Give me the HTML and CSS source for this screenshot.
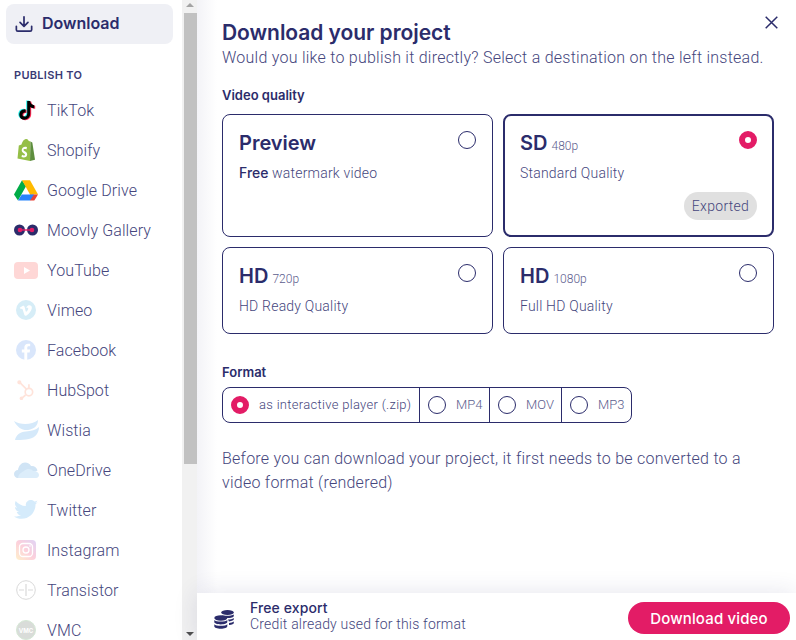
FILE: index.html
```html
<!DOCTYPE html>
<html lang="en">
<head>
<meta charset="utf-8">
<title>Download your project</title>
<link rel="stylesheet" href="styles.css">
</head>
<body>
<div class="app">
  <aside class="sidebar">
    <div class="download-tab">
      <svg class="dl-icon" viewBox="0 0 20 20" width="20" height="20" fill="none" stroke="#2b2c6b" stroke-width="1.9" stroke-linecap="round" stroke-linejoin="round"><path d="M10 2v10.500M5.600 8.300 10 12.600l4.400-4.300M1.500 12.500v3.800c0 1 .8 1.700 1.700 1.700h13.600c1 0 1.700-.8 1.700-1.700v-3.800"/></svg>
      <span class="download-text">Download</span>
    </div>
    <div class="publish-label">PUBLISH TO</div>
    <ul class="dest-list">
      <li class="dest"><span class="ico"><svg viewBox="0 0 24 24" width="24" height="24"><path fill="#25f4ee" d="M12.200 2.500h3c.3 2.400 1.700 4 4 4.300v3c-1.500 0-2.800-.4-4-1.200v6.400c0 6.800-8.700 8.300-10.600 3-1.300-4.300 2-7.700 6-7.100v3.200c-2-.5-3.500.9-3 2.800.7 1.900 4.600 1.600 4.600-1.700z"/><path fill="#fe2c55" d="M14.200 3.500h3c.3 2.400 1.700 4 4 4.300v3c-1.500 0-2.800-.4-4-1.200v6.400c0 6.800-8.700 8.300-10.600 3-1.300-4.300 2-7.700 6-7.100v3.200c-2-.5-3.500.9-3 2.800.7 1.900 4.600 1.600 4.600-1.700z"/><path fill="#000" d="M13.200 3h3c.3 2.400 1.700 4 4 4.300v3c-1.500 0-2.800-.4-4-1.200v6.400c0 6.800-8.700 8.300-10.600 3-1.300-4.300 2-7.700 6-7.100v3.200c-2-.5-3.500.9-3 2.800.7 1.900 4.600 1.600 4.600-1.700z"/></svg></span><span>TikTok</span></li>
      <li class="dest"><span class="ico"><svg viewBox="0 0 24 24" width="24" height="24"><path fill="#95bf47" d="M16.500 3.500 14.800 3C14.200 1.500 13.200.8 12 1 9.500 1.300 8 4.500 7.500 6.500L4.800 7.400 3.500 20.500 16 23z"/><path fill="#5e8e3e" d="M16.500 3.500 16 23l5-1.200L18.300 4.500z"/><path fill="#fff" d="M13 9.200l-.6 2.200c-1.400-.7-3-.4-2.900.6.100 1.200 3.500 1.500 3.700 4.300.2 2.700-2.900 4.100-5.700 2.800l.5-2.300c1.200.9 3.100 1 3-.3-.1-1.300-3.100-1.500-3.300-4.100C7.500 9.600 10.600 7.900 13 9.200z"/></svg></span><span>Shopify</span></li>
      <li class="dest"><span class="ico"><svg viewBox="0 0 24 21" width="24" height="21"><path fill="#00ac47" d="M8 .3 0 14.500l4 6 8-14.200z"/><path fill="#ffba00" d="M8 .3h8l8 14.200h-8z"/><path fill="#ea4335" d="M16 14.500h8l-3.500 5.800c-.2.200-.5.200-.7.200H16z"/><path fill="#2684fc" d="M4 20.500 7.800 14.500H20l-4 6z"/></svg></span><span>Google Drive</span></li>
      <li class="dest"><span class="ico"><svg viewBox="0 0 24 12" width="24" height="12"><circle cx="5.500" cy="6" r="5.500" fill="#2b2c6b"/><circle cx="18.500" cy="6" r="5.500" fill="#2b2c6b"/><circle cx="6" cy="6" r="2.300" fill="#e31c66"/><circle cx="18" cy="6" r="2.300" fill="#e31c66"/><rect x="6" y="5.300" width="12" height="1.400" fill="#e31c66"/></svg></span><span>Moovly Gallery</span></li>
      <li class="dest"><span class="ico"><svg viewBox="0 0 24 17" width="24" height="17"><rect width="24" height="17" rx="4" fill="#fed7d6"/><path fill="#fff" d="M10 5l6 3.500-6 3.500z"/></svg></span><span>YouTube</span></li>
      <li class="dest"><span class="ico"><svg viewBox="0 0 24 24" width="20" height="20"><circle cx="12" cy="12" r="12" fill="#d6edf7"/><path fill="#fff" d="M4.500 9.400 6 11c1-.8 1.500-.8 2 .5l2 6.200c.6 1.500 1.500 1.600 3 .6 2.500-1.800 5.500-5.500 6-8.500.4-3-2.500-4.200-5-2.800-.8.600-1.500 1.400-1.800 2.700 1.500-1 3-.3 2.400 1.300-.5 1.200-1.900 3-2.500 3s-.8-2-1.500-4.700C10 6.500 9 6.500 7.800 7.200z"/></svg></span><span>Vimeo</span></li>
      <li class="dest"><span class="ico"><svg viewBox="0 0 24 24" width="20" height="20"><circle cx="12" cy="12" r="12" fill="#d9e6fb"/><path fill="#fff" d="M10 24V15H7v-3.500h3V9c0-3 1.800-4.600 4.500-4.600l2.500.2v3h-1.700c-1.500 0-1.800.8-1.800 1.800v2.100h3.400l-.5 3.500h-2.900v9z"/></svg></span><span>Facebook</span></li>
      <li class="dest"><span class="ico"><svg viewBox="0 0 24 24" width="20" height="20" fill="none" stroke="#ffe3da" stroke-width="2"><circle cx="15.500" cy="14.500" r="4.500"/><path d="M15.500 5v4.500M5 3.500l7.500 7.500M11.500 18l-4 3.500"/><circle cx="4" cy="2.800" r="1.500" fill="#ffe3da"/><circle cx="6.500" cy="22" r="1.200" fill="#ffe3da"/></svg></span><span>HubSpot</span></li>
      <li class="dest"><span class="ico"><svg viewBox="0 0 25 20" width="25" height="20"><path fill="#d5e9fa" d="M0 1C6 5 18 5 24 0 24 6 20 9 14 10 8 10.500 3 7 0 1z"/><path fill="#d5e9fa" d="M1 20C2 15 6 12 12 11.500 17 11 22 10 25 7 25 14 20 19 12 19.500 8 20 4 20 1 20z"/></svg></span><span>Wistia</span></li>
      <li class="dest"><span class="ico"><svg viewBox="0 0 25 16" width="25" height="16"><path fill="#d0e4f5" d="M4 16C1.500 16 0 14 0 12c0-2.300 1.800-4 4-4 .5-4 3.500-7.500 7-7.500 2.800 0 5 1.500 6 3.500 3-.5 6 1.500 6.500 4.500L14 13z"/><path fill="#dcedfa" d="M5 16c-2 0 0-5 5-7 3-3 8-2 9 0 3-.5 6 1.500 6 4 0 1.500-1 3-3 3z"/></svg></span><span>OneDrive</span></li>
      <li class="dest"><span class="ico"><svg viewBox="0 0 24 20" width="24" height="20"><path fill="#d5ebfb" d="M24 2.300c-.9.400-1.800.7-2.800.8 1-.6 1.800-1.500 2.200-2.700-1 .6-2 1-3.100 1.200A4.900 4.900 0 0 0 11.900 6C7.800 5.800 4.200 3.900 1.700.9c-1.300 2.200-.7 5.100 1.500 6.600-.8 0-1.600-.2-2.200-.6 0 2.300 1.600 4.400 3.900 4.900-.7.200-1.500.2-2.200.1.600 2 2.400 3.400 4.600 3.400C5.200 16 2.600 16.800 0 16.500 2.200 17.900 4.800 18.800 7.500 18.800c9.100 0 14.300-7.700 14-14.600 1-.7 1.800-1.500 2.500-1.900z"/></svg></span><span>Twitter</span></li>
      <li class="dest"><span class="ico"><svg viewBox="0 0 20 20" width="20" height="20"><defs><linearGradient id="ig" x1="0" y1="1" x2="1" y2="0"><stop offset="0" stop-color="#fff0cc"/><stop offset=".5" stop-color="#fcd0dc"/><stop offset="1" stop-color="#e0d4f5"/></linearGradient></defs><rect width="20" height="20" rx="4" fill="url(#ig)"/><rect x="3.500" y="3.500" width="13" height="13" rx="3.500" fill="none" stroke="#fff" stroke-width="1.300"/><circle cx="10" cy="10" r="3" fill="none" stroke="#fff" stroke-width="1.300"/><circle cx="14" cy="6" r=".8" fill="#fff"/></svg></span><span>Instagram</span></li>
      <li class="dest"><span class="ico"><svg viewBox="0 0 20 20" width="20" height="20" fill="none" stroke="#d9d9d9" stroke-width="1"><circle cx="10" cy="10" r="9.300"/><path stroke-width="1.200" d="M3 10h5M12 10h5M10 4v12"/></svg></span><span>Transistor</span></li>
      <li class="dest"><span class="ico"><span class="vmc">VMC</span></span><span>VMC</span></li>
    </ul>
  </aside>
  <div class="scrollbar">
    <div class="arrow-up"></div>
    <div class="thumb"></div>
    <div class="track-rest"></div>
    <div class="arrow-down"></div>
  </div>
  <main class="main">
    <div class="content">
      <button class="close" aria-label="Close"><svg viewBox="0 0 13 13" width="13" height="13" fill="none" stroke="#2b2c6b" stroke-width="1.500"><path d="M.7.700l11.600 11.600M12.300.700.700 12.300"/></svg></button>
      <h1 class="title">Download your project</h1>
      <p class="subtitle">Would you like to publish it directly? Select a destination on the left instead.</p>
      <h2 class="field-label quality-label">Video quality</h2>
      <div class="quality-grid">
        <div class="card tall">
          <span class="radio card-radio"></span>
          <div class="card-title">Preview</div>
          <div class="card-desc"><b>Free</b> watermark video</div>
        </div>
        <div class="card tall selected">
          <span class="radio on card-radio"></span>
          <div class="card-title">SD <small>480p</small></div>
          <div class="card-desc">Standard Quality</div>
          <span class="pill">Exported</span>
        </div>
        <div class="card">
          <span class="radio card-radio"></span>
          <div class="card-title">HD <small>720p</small></div>
          <div class="card-desc">HD Ready Quality</div>
        </div>
        <div class="card">
          <span class="radio card-radio"></span>
          <div class="card-title">HD <small>1080p</small></div>
          <div class="card-desc">Full HD Quality</div>
        </div>
      </div>
      <h2 class="field-label format-label">Format</h2>
      <div class="format-group">
        <div class="fmt fmt-zip"><span class="radio on"></span><span class="fmt-dark">as interactive player (.zip)</span></div>
        <div class="fmt fmt-mp4"><span class="radio"></span><span class="fmt-name">MP4</span></div>
        <div class="fmt fmt-mov"><span class="radio"></span><span class="fmt-name">MOV</span></div>
        <div class="fmt fmt-mp3"><span class="radio"></span><span class="fmt-name">MP3</span></div>
      </div>
      <p class="note">Before you can download your project, it first needs to be converted to a video format (rendered)</p>
    </div>
    <footer class="footer">
      <svg class="coins" viewBox="0 0 20 20" width="20" height="20" fill="#2b2c6b"><ellipse cx="13.500" cy="3.500" rx="6.300" ry="2.600"/><path d="M7.500 6.200c1.500.8 10 1 12.300-.6v1.300c0 1.200-2.800 2.200-6.300 2.200-1.300 0-2.700-.2-3.600-.5z"/><path d="M14 10.500c2 0 4.500-.5 5.800-1.500v1.300c0 1-1.800 1.800-4.800 2.100z"/><path d="M15 14c2 0 3.800-.6 4.800-1.400v1.300c0 1-1.800 1.800-4.800 2z"/><ellipse cx="6.800" cy="9" rx="6.500" ry="2.700"/><path d="M.3 11c1.500 2 11.500 2 13 0v2c0 1.400-2.900 2.400-6.500 2.400S.3 14.400.3 13z"/><path d="M.3 15.300c1.500 2 11.500 2 13 0v2c0 1.500-2.900 2.500-6.500 2.500S.3 18.800.3 17.300z"/></svg>
      <div class="foot-text">
        <div class="foot-title">Free export</div>
        <div class="foot-sub">Credit already used for this format</div>
      </div>
      <button class="cta">Download video</button>
    </footer>
  </main>
</div>
</body>
</html>
```
FILE: styles.css
```css
* { box-sizing: border-box; }
html, body { margin: 0; padding: 0; height: 100%; overflow: hidden; }
body { font-family: "Inter", "Liberation Sans", sans-serif; color: #2b2c6b; background: #fff; }
.app { display: flex; width: 796px; height: 640px; overflow: hidden; }

.sidebar { width: 182px; flex: none; height: 640px; overflow: hidden; padding: 4px 9px 0 6px; background: #fff; }
.download-tab { height: 40px; border-radius: 8px; background: #eff0f5; display: flex; align-items: center; gap: 9px; padding-left: 9px; font-size: 16px; font-weight: 600; color: #2b2c6b; }
.download-text { margin-top: -2px; }
.dl-icon { flex: none; width: 18px; height: 18px; }
.publish-label { margin-top: 25px; padding-left: 8px; font-size: 11px; line-height: 13px; font-weight: 600; letter-spacing: .3px; color: #3a3b75; }
.dest-list { list-style: none; margin: 8px 0 0; padding: 0; }
.dest { height: 40px; display: flex; align-items: center; gap: 3px; font-family: "Roboto", sans-serif; font-weight: 300; font-size: 16px; letter-spacing: .1px; color: #45467d; }
.ico { width: 36px; flex: none; margin-left: 2px; display: flex; align-items: center; justify-content: center; }
.vmc { width: 20px; height: 20px; border-radius: 50%; background: #d9dcd9; color: #fff; font-family: "Inter", sans-serif; font-size: 6px; font-weight: 700; letter-spacing: 0; display: flex; align-items: center; justify-content: center; border: 1px solid #d5e8d5; }

.scrollbar { width: 15px; flex: none; height: 640px; background: #f1f1f1; display: flex; flex-direction: column; align-items: center; padding-left: 1px; }
.arrow-up { flex: none; margin-top: 3px; width: 0; height: 0; border-left: 4px solid transparent; border-right: 4px solid transparent; border-bottom: 4px solid #a3a3a3; }
.thumb { flex: none; margin-top: 6px; height: 451px; width: 13px; background: #c1c1c1; }
.track-rest { flex: 1; }
.arrow-down { flex: none; margin-bottom: 4px; width: 0; height: 0; border-left: 4px solid transparent; border-right: 4px solid transparent; border-top: 4px solid #505050; }

.main { position: relative; flex: 1; height: 640px; display: flex; flex-direction: column; background: linear-gradient(to right, #f3f3f7 0, #ffffff 20px); }
.content { position: relative; flex: 1; padding: 20px 21px 0 25px; }
.close { position: absolute; top: 16px; right: 18px; padding: 0; margin: 0; width: 13px; height: 13px; border: 0; background: none; display: block; line-height: 0; }
.title { margin: 0; font-size: 21px; line-height: 26px; font-weight: 600; letter-spacing: -.05px; color: #2b2c6b; }
.subtitle { margin: 0; font-family: "Roboto", sans-serif; font-weight: 300; font-size: 16px; line-height: 24px; letter-spacing: .25px; color: #45467d; }
.field-label { margin: 0; font-size: 13px; line-height: 16px; font-weight: 600; color: #2b2c6b; }
.quality-label { margin-top: 17px; }
.quality-grid { margin-top: 11px; display: grid; grid-template-columns: 271px 271px; grid-template-rows: 123px 87px; gap: 10px; }
.card { position: relative; border: 1px solid #2b2c6b; border-radius: 8px; padding: 14px 16px 0; background: #fff; }
.card.selected { border-width: 2px; padding: 13px 15px 0; }
.card-title { font-size: 20px; line-height: 28px; font-weight: 600; color: #2b2c6b; }
.card-title small { font-family: "Roboto", sans-serif; font-size: 12px; line-height: 0; font-weight: 300; color: #5c5d8e; margin-left: -1px; }
.card-desc { margin-top: 6px; font-family: "Roboto", sans-serif; font-weight: 300; font-size: 14px; line-height: 20px; letter-spacing: .2px; color: #45467d; }
.card-desc b { font-family: "Inter", sans-serif; font-weight: 500; font-size: 14px; letter-spacing: 0; color: #2b2c6b; }
.radio { display: block; flex: none; width: 18px; height: 18px; border-radius: 50%; border: 1px solid #2b2c6b; background: #fff; }
.radio.on { border: 6px solid #e31c66; }
.card-radio { position: absolute; top: 16px; right: 16px; }
.selected .card-radio { top: 15px; right: 15px; }
.pill { position: absolute; right: 15px; bottom: 15px; height: 28px; width: 73px; border-radius: 14px; background: #e0e0e0; font-family: "Roboto", sans-serif; font-weight: 300; font-size: 14px; letter-spacing: .3px; color: #45467d; display: flex; align-items: center; justify-content: center; }

.format-label { margin-top: 30px; }
.format-group { margin-top: 7px; display: flex; width: 410px; height: 36px; border: 1px solid #2b2c6b; border-radius: 8px; }
.fmt { display: flex; align-items: center; gap: 10px; padding-left: 8px; border-left: 1px solid #2b2c6b; font-family: "Roboto", sans-serif; font-weight: 300; font-size: 13px; color: #5c5d8e; }
.fmt-name { margin-top: -2px; }
.fmt-dark { margin-top: -2px; color: #45467d; letter-spacing: .3px; }
.fmt-zip { width: 196px; border-left: 0; }
.fmt-mp4 { width: 70px; }
.fmt-mov { width: 72px; }
.fmt-mp3 { width: 70px; }
.note { margin: 24px 0 0; width: 530px; font-family: "Roboto", sans-serif; font-weight: 300; font-size: 16px; line-height: 24px; letter-spacing: .25px; color: #45467d; }

.footer { position: relative; flex: none; height: 47px; background: #fff; display: flex; align-items: center; padding: 0 6px 0 17px; box-shadow: 0 0 24px rgba(43,44,107,.12); }
.coins { flex: none; margin-top: 4px; }
.foot-text { margin-left: 16px; flex: 1; margin-top: -1px; }
.foot-title { font-size: 14px; line-height: 17px; font-weight: 500; letter-spacing: .1px; color: #2b2c6b; }
.foot-sub { font-family: "Roboto", sans-serif; font-weight: 300; font-size: 14px; line-height: 17px; letter-spacing: .2px; color: #45467d; }
.cta { width: 162px; height: 32px; margin-top: 3px; border: 0; border-radius: 16px; background: #e31c66; color: #fff; font-family: "Inter", sans-serif; font-size: 15px; font-weight: 500; letter-spacing: .15px; padding: 0; }
```
